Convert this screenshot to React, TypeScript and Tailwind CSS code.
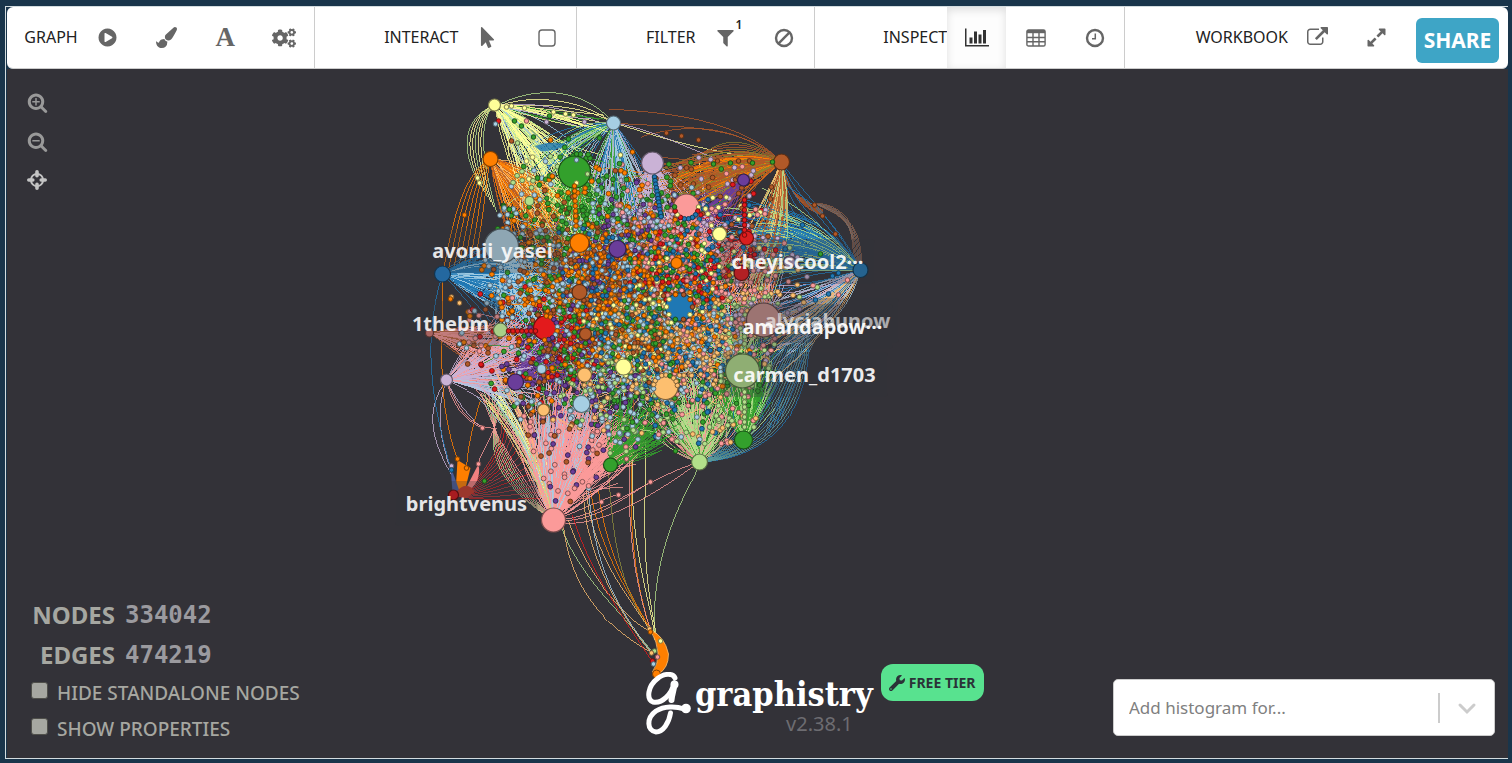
import React from "react";
import { FaCogs, FaMousePointer, FaWrench } from "react-icons/fa";

/* ---------- icons ---------- */

type IconProps = { className?: string };

const Glyph = ({ d, box = "0 0 1792 1792", className = "size-5" }: { d: string; box?: string; className?: string }) => (
  <svg viewBox={box} fill="currentColor" className={className} aria-hidden="true">
    <path d={d} fillRule="evenodd" />
  </svg>
);

const PLAY =
  "M896 128q209 0 385.5 103t279.5 279.5 103 385.5-103 385.5-279.5 279.5-385.5 103-385.5-103-279.5-279.5-103-385.5 103-385.5 279.5-279.5 385.5-103zm384 823q32-18 32-55t-32-55l-544-320q-31-19-64-1-32 19-32 56v640q0 37 32 56 16 8 32 8 17 0 32-9z";
const BRUSH =
  "M1615 0q70 0 122.5 46.5t52.5 116.5q0 63-45 151-332 629-465 752-97 91-218 91-126 0-216.5-92.5t-90.5-219.5q0-128 92-212l638-579q59-54 130-54zm-909 1034q39 76 106.5 130t150.5 76l1 71q4 213-129.5 347t-348.5 134q-123 0-218-46.5t-152.5-127.5-86.5-183-29-220q7 5 41 30t62 44.5 59 36.5 46 17q41 0 55-37 25-66 57.5-112.5t69.5-76 88-47.5 103-25.5 125-10.5z";
const FILTER =
  "M1595 295q17 41-14 70l-493 493v742q0 42-39 59-13 5-25 5-27 0-45-19l-256-256q-19-19-19-45v-486l-493-493q-31-29-14-70 17-39 59-39h1280q42 0 59 39z";
const CHART =
  "M640 896v512h-256v-512h256zm384-512v1024h-256v-1024h256zm1024 1152v128h-2048v-1536h128v1408h1920zm-640-896v768h-256v-768h256zm384-384v1152h-256v-1152h256z";
const EXTERNAL =
  "M1408 928v320q0 119-84.5 203.5t-203.5 84.5h-832q-119 0-203.5-84.5t-84.5-203.5v-832q0-119 84.5-203.5t203.5-84.5h704q14 0 23 9t9 23v64q0 14-9 23t-23 9h-704q-66 0-113 47t-47 113v832q0 66 47 113t113 47h832q66 0 113-47t47-113v-320q0-14 9-23t23-9h64q14 0 23 9t9 23zm384-864v512q0 26-19 45t-45 19-45-19l-176-176-652 652q-10 10-23 10t-23-10l-114-114q-10-10-10-23t10-23l652-652-176-176q-19-19-19-45t19-45 45-19h512q26 0 45 19t19 45z";
const EXPAND =
  "M883 1056q0 13-10 23l-332 332 144 144q19 19 19 45t-19 45-45 19h-448q-26 0-45-19t-19-45v-448q0-26 19-45t45-19 45 19l144 144 332-332q10-10 23-10t23 10l114 114q10 10 10 23zm781-864v448q0 26-19 45t-45 19-45-19l-144-144-332 332q-10 10-23 10t-23-10l-114-114q-10-10-10-23t10-23l332-332-144-144q-19-19-19-45t19-45 45-19h448q26 0 45 19t19 45z";
const LENS =
  "M1216 832q0-185-131.5-316.5t-316.5-131.5-316.5 131.5-131.5 316.5 131.5 316.5 316.5 131.5 316.5-131.5 131.5-316.5zm512 832q0 53-37.5 90.5t-90.5 37.5q-54 0-90-38l-343-342q-179 124-399 124-143 0-273.5-55.5t-225-150-150-225-55.5-273.5 55.5-273.5 150-225 225-150 273.5-55.5 273.5 55.5 225 150 150 225 55.5 273.5q0 220-124 399l343 343q37 37 37 90z";
const MINUS = "M480 768h576q32 0 32 32v64q0 32-32 32h-576q-32 0-32-32v-64q0-32 32-32z";
const PLUS =
  "M1088 800v64q0 13-9.5 22.5t-22.5 9.5h-224v224q0 13-9.5 22.5t-22.5 9.5h-64q-13 0-22.5-9.5t-9.5-22.5v-224h-224q-13 0-22.5-9.5t-9.5-22.5v-64q0-13 9.5-22.5t22.5-9.5h224v-224q0-13 9.5-22.5t22.5-9.5h64q13 0 22.5 9.5t9.5 22.5v224h224q13 0 22.5 9.5t9.5 22.5z";

const SquareIcon = () => (
  <svg viewBox="0 0 20 20" className="size-5" fill="none" stroke="currentColor" strokeWidth="1.4" aria-hidden="true">
    <rect x="2" y="2" width="16" height="16" rx="3" />
  </svg>
);
const BanIcon = () => (
  <svg viewBox="0 0 20 20" className="size-5" fill="none" stroke="currentColor" strokeWidth="2.4" aria-hidden="true">
    <circle cx="10" cy="10" r="8" />
    <path d="M4.4 15.6 15.6 4.4" />
  </svg>
);
const ClockIcon = () => (
  <svg viewBox="0 0 20 20" className="size-5" fill="none" stroke="currentColor" aria-hidden="true">
    <circle cx="10" cy="10" r="8" strokeWidth="2.4" />
    <path d="M10.3 5.5v5.2H7" strokeWidth="1.5" />
  </svg>
);
const TableIcon = () => (
  <svg viewBox="0 0 20 18" className="h-[18px] w-5" fill="none" stroke="currentColor" strokeWidth="1.4" aria-hidden="true">
    <rect x="0.9" y="1" width="18.2" height="16" rx="1.6" />
    <path d="M1 2.6h18" strokeWidth="3.2" />
    <path d="M1 8.5h18M1 12.7h18M7 3v14M13 3v14" />
  </svg>
);
const CrosshairIcon = () => (
  <svg viewBox="0 0 20 20" className="size-5" fill="none" stroke="currentColor" aria-hidden="true">
    <circle cx="10" cy="10" r="6.1" strokeWidth="1.9" />
    <path d="M10 1.8v4M10 14.2v4M1.8 10h4M14.2 10h4" strokeWidth="3.6" strokeLinecap="round" />
  </svg>
);
const LetterIcon = () => (
  <span className="font-['Liberation_Serif',serif] text-[27px] leading-none font-bold">A</span>
);
const ScriptG = ({ className }: IconProps) => (
  <svg viewBox="0 0 46 64" className={className} fill="none" stroke="#fff" strokeLinecap="round" aria-hidden="true">
    <path d="M30 6C28 1 19 1 12 7C3 14 1 27 8 30C17 32 27 22 29 11" strokeWidth="5" />
    <path d="M29.5 12C29 18 27 22 26.500 28" strokeWidth="6" />
    <path d="M25.500 41C24 51 18 60 11 60C2 59 1 46 11 39C19 34 31 34 39 37" strokeWidth="5" />
    <circle cx="41" cy="36.500" r="4.8" fill="#fff" stroke="none" />
    <circle cx="29.5" cy="12.500" r="4" fill="#fff" stroke="none" />
  </svg>
);

/* ---------- network drawing ---------- */

const C = {
  sky: "#a6cee3",
  blue: "#1f78b4",
  lime: "#b2df8a",
  green: "#33a02c",
  pink: "#fb9a99",
  red: "#e31a1c",
  sand: "#fdbf6f",
  orange: "#ff7f00",
  lilac: "#cab2d6",
  purple: "#6a3d9a",
  yellow: "#ffff99",
  brown: "#b15928",
};

let seed = 20417;
const rnd = () => {
  seed = (seed * 1664525 + 1013904223) % 4294967296;
  return seed / 4294967296;
};
const gauss = () => (rnd() + rnd() + rnd() - 1.5) / 1.5;
const pick = (list: string[]) => list[Math.floor(rnd() * list.length)];
const n1 = (v: number) => v.toFixed(1);
const shade = (hex: string) => {
  const v = parseInt(hex.slice(1), 16);
  const f = (s: number) => Math.round(((v >> s) & 255) * 0.5);
  return `rgb(${f(16)},${f(8)},${f(0)})`;
};
const shuffle = <T,>(list: T[]) => {
  for (let i = list.length - 1; i > 0; i--) {
    const j = Math.floor(rnd() * (i + 1));
    [list[i], list[j]] = [list[j], list[i]];
  }
  return list;
};

const OUTLINE: [number, number][] = [
  [520, 155], [560, 145], [600, 158], [640, 165], [700, 155], [755, 170], [770, 215], [800, 250], [830, 275], [800, 310], [772, 350], [768, 400], [750, 440],
  [715, 445], [650, 440], [618, 462], [590, 500], [548, 505], [530, 450], [510, 400], [465, 370], [455, 335], [475, 290], [495, 225], [508, 190],
];
const inside = (x: number, y: number) => {
  let hit = false;
  for (let i = 0, j = OUTLINE.length - 1; i < OUTLINE.length; j = i++) {
    const [xi, yi] = OUTLINE[i];
    const [xj, yj] = OUTLINE[j];
    if (yi > y !== yj > y && x < ((xj - xi) * (y - yi)) / (yj - yi) + xi) hit = !hit;
  }
  return hit;
};

const ZONES: { x: number; y: number; colors: string[] }[] = [
  { x: 520, y: 140, colors: [C.green, C.yellow, C.sky, C.lime] },
  { x: 575, y: 200, colors: [C.green, C.green, C.green, C.brown, C.orange, C.sky] },
  { x: 690, y: 165, colors: [C.brown, C.brown, C.green, C.lilac, C.pink] },
  { x: 645, y: 210, colors: [C.lilac, C.purple, C.sky, C.orange, C.green, C.pink] },
  { x: 740, y: 220, colors: [C.brown, C.red, C.pink, C.lilac, C.blue, C.yellow] },
  { x: 600, y: 260, colors: [C.orange, C.brown, C.orange, C.purple, C.sky, C.blue] },
  { x: 530, y: 270, colors: [C.sky, C.sky, C.brown, C.orange, C.green] },
  { x: 485, y: 320, colors: [C.sky, C.brown, C.pink, C.red, C.orange] },
  { x: 680, y: 270, colors: [C.pink, C.yellow, C.blue, C.orange, C.green, C.red] },
  { x: 640, y: 330, colors: [C.orange, C.blue, C.yellow, C.sand, C.brown, C.sky, C.green] },
  { x: 550, y: 350, colors: [C.sky, C.red, C.purple, C.orange, C.brown, C.green] },
  { x: 700, y: 350, colors: [C.sand, C.sand, C.orange, C.sky, C.blue, C.pink] },
  { x: 770, y: 310, colors: [C.pink, C.lime, C.lilac, C.sand] },
  { x: 600, y: 400, colors: [C.sky, C.sky, C.sand, C.green, C.purple, C.lime] },
  { x: 690, y: 410, colors: [C.sand, C.green, C.blue, C.pink, C.sky, C.lime] },
  { x: 745, y: 410, colors: [C.green, C.lime, C.sand, C.pink] },
  { x: 560, y: 460, colors: [C.pink, C.pink, C.pink, C.purple, C.sky, C.brown] },
];
const zoneColor = (x: number, y: number) => {
  let best = ZONES[0];
  let dist = Infinity;
  for (const z of ZONES) {
    const d = Math.hypot(z.x - x, z.y - y) + rnd() * 40;
    if (d < dist) {
      dist = d;
      best = z;
    }
  }
  return pick(best.colors);
};

type Node = { x: number; y: number; c: string; r: number };
const nodes: Node[] = [];
while (nodes.length < 850) {
  const x = 445 + rnd() * 390;
  const y = 140 + rnd() * 370;
  if (inside(x, y)) nodes.push({ x, y, c: zoneColor(x, y), r: 2.4 });
}
while (nodes.length < 2300) {
  const x = 632 + gauss() * 190;
  const y = 305 + gauss() * 190;
  if (inside(x, y)) nodes.push({ x, y, c: zoneColor(x, y), r: 2.4 });
}
while (nodes.length < 4700) {
  const x = 640 + gauss() * 145;
  const y = 302 + gauss() * 125;
  if (inside(x, y)) nodes.push({ x, y, c: zoneColor(x, y), r: 2.2 });
}

type Edge = { d: string; c: string };
const bendTo = (x1: number, y1: number, x2: number, y2: number, bend: number) => {
  const mx = (x1 + x2) / 2 - (y2 - y1) * bend;
  const my = (y1 + y2) / 2 + (x2 - x1) * bend;
  return `M${n1(x1)} ${n1(y1)}Q${n1(mx)} ${n1(my)} ${n1(x2)} ${n1(y2)}`;
};

/* source, target centre, target spread, count, colours, bend, bend spread */
type Fan = [number, number, number, number, number, number, number, string[], number, number];
const FANS: Fan[] = [
  [494, 105, 560, 195, 70, 65, 120, [C.yellow, C.yellow, C.lime, C.sky, C.yellow], -0.1, 0.3],
  [494, 105, 590, 125, 30, 15, 20, [C.yellow, C.green, C.lilac], -0.05, 0.2],
  [490, 159, 560, 240, 70, 70, 150, [C.orange, C.orange, C.sand, C.brown], -0.05, 0.3],
  [613, 123, 620, 215, 70, 50, 120, [C.sky, C.lilac, C.sky, C.blue, C.green], 0, 0.3],
  [613, 123, 545, 165, 40, 25, 50, [C.sky, C.blue, C.lime, C.green], 0.1, 0.3],
  [574, 172, 580, 225, 90, 50, 220, [C.green, C.green, C.lime], 0, 0.3],
  [652, 163, 655, 240, 90, 60, 120, [C.lilac], 0, 0.3],
  [781, 162, 690, 190, 90, 40, 200, [C.brown, C.brown, C.brown, C.brown, "#8a8a2c", C.orange], 0.12, 0.3],
  [781, 162, 745, 300, 40, 80, 60, [C.sand, C.brown, C.lime], -0.1, 0.2],
  [743, 180, 695, 220, 50, 35, 70, [C.purple], 0, 0.3],
  [686, 207, 690, 260, 80, 60, 150, [C.pink], 0, 0.3],
  [746, 238, 715, 270, 50, 50, 50, [C.red, C.pink], 0, 0.3],
  [860, 270, 755, 240, 60, 60, 160, [C.blue, C.blue, C.blue, C.lime], 0.15, 0.25],
  [860, 270, 760, 330, 55, 60, 80, [C.sky, C.sand, C.lilac, C.blue], -0.1, 0.25],
  [442, 274, 520, 285, 60, 65, 190, [C.blue, C.blue, C.blue, C.sky], -0.05, 0.3],
  [501, 246, 530, 310, 60, 70, 160, [C.sky], 0, 0.3],
  [428, 333, 500, 345, 60, 40, 80, [C.pink, C.pink, C.brown], 0, 0.2],
  [446, 380, 520, 345, 70, 60, 120, [C.lilac, C.lilac, C.pink], 0.05, 0.25],
  [446, 380, 530, 400, 50, 30, 30, [C.lilac, C.sky], -0.1, 0.2],
  [515, 382, 560, 340, 50, 50, 80, [C.purple], 0, 0.3],
  [545, 328, 560, 320, 60, 50, 90, [C.red], 0, 0.3],
  [743, 440, 740, 370, 45, 60, 230, [C.green, C.green, C.lime], 0.05, 0.3],
  [742, 371, 725, 330, 60, 60, 100, [C.lime], 0, 0.3],
  [699, 462, 690, 400, 80, 50, 220, [C.lime, C.lime, C.lime, C.pink, C.green], 0, 0.35],
  [610, 465, 645, 420, 60, 45, 140, [C.green], 0, 0.3],
  [553, 520, 565, 410, 70, 60, 260, [C.pink, C.pink, C.sky, C.lilac, C.pink, C.pink], -0.05, 0.25],
  [553, 520, 610, 440, 50, 50, 200, [C.pink], -0.12, 0.3],
  [553, 520, 495, 390, 25, 30, 50, [C.sand, C.pink, C.sky, C.lime, C.yellow], 0.1, 0.12],
  [763, 318, 760, 290, 50, 50, 60, [C.pink, C.lilac], 0, 0.3],
];

const body: Edge[] = [];
for (let i = 0; i < 3600; i++) {
  const a = nodes[Math.floor(rnd() * nodes.length)];
  const b = nodes[Math.floor(rnd() * nodes.length)];
  if (Math.hypot(a.x - b.x, a.y - b.y) < 110) body.push({ d: bendTo(a.x, a.y, b.x, b.y, gauss() * 0.3), c: a.c });
}
const fans: Edge[] = [];
for (const [x, y, tx, ty, sx, sy, count, colors, bend, spread] of FANS) {
  for (let i = 0; i < count; i++) {
    fans.push({ d: bendTo(x, y, tx + gauss() * sx, ty + gauss() * sy, bend + gauss() * spread), c: pick(colors) });
  }
}

const arc = (x1: number, y1: number, cx: number, cy: number, cx2: number, cy2: number, x2: number, y2: number, c: string): Edge => ({
  d: `M${x1} ${y1}C${n1(cx)} ${n1(cy)} ${n1(cx2)} ${n1(cy2)} ${x2} ${y2}`,
  c,
});
const strands: Edge[] = [
  arc(498, 105, 530, 88, 580, 84, 613, 123, C.lime),
  arc(498, 106, 530, 94, 580, 98, 613, 123, C.yellow),
  arc(498, 106, 540, 104, 580, 104, 613, 123, C.yellow),
  arc(608, 109, 660, 112, 740, 118, 781, 162, C.brown),
  arc(614, 123, 660, 128, 740, 120, 781, 162, C.brown),
  arc(640, 137, 680, 125, 730, 120, 781, 162, C.brown),
  arc(613, 123, 650, 128, 690, 150, 720, 160, C.lilac),
  arc(613, 123, 640, 130, 680, 148, 781, 162, C.yellow),
  arc(442, 274, 418, 350, 436, 420, 453, 478, C.blue),
  arc(446, 380, 424, 410, 430, 440, 453, 478, C.lilac),
  arc(446, 380, 432, 420, 444, 450, 453, 478, C.lilac),
  arc(442, 274, 442, 350, 436, 400, 457, 460, C.orange),
  arc(480, 400, 468, 440, 468, 450, 466, 466, C.orange),
  arc(500, 395, 500, 430, 480, 450, 478, 464, C.pink),
  arc(446, 380, 450, 400, 462, 420, 482, 428, C.pink),
  arc(446, 380, 455, 405, 470, 430, 496, 428, C.pink),
  arc(446, 380, 450, 392, 470, 420, 482, 428, C.lilac),
  arc(699, 465, 676, 510, 650, 560, 654, 640, C.lime),
  arc(645, 440, 645, 530, 640, 560, 657, 640, C.yellow),
  arc(633, 440, 626, 540, 648, 590, 655, 640, C.yellow),
  arc(632, 450, 626, 540, 640, 600, 650, 630, C.orange),
  arc(630, 450, 624, 540, 640, 600, 650, 630, C.pink),
  arc(608, 470, 612, 540, 620, 590, 650, 630, "#8c8c3c"),
  arc(598, 490, 605, 560, 640, 610, 650, 630, C.orange),
  arc(590, 490, 600, 560, 640, 610, 650, 630, C.orange),
  arc(586, 490, 590, 560, 640, 610, 650, 632, C.sand),
  arc(588, 490, 594, 560, 610, 600, 652, 654, C.sky),
  arc(583, 495, 585, 560, 630, 630, 652, 654, C.sand),
  arc(572, 515, 585, 560, 610, 600, 652, 662, C.red),
  arc(560, 525, 580, 580, 620, 610, 650, 650, C.lime),
  arc(563, 525, 570, 600, 620, 635, 650, 652, C.sand),
  arc(568, 520, 580, 560, 620, 620, 652, 632, C.sand),
  arc(553, 520, 590, 525, 620, 500, 650, 482, C.pink),
  arc(553, 522, 590, 530, 640, 505, 699, 462, C.pink),
  arc(553, 520, 600, 520, 640, 480, 699, 462, C.pink),
  arc(553, 520, 570, 515, 600, 500, 618, 494, C.pink),
];
for (let i = 0; i < 7; i++) {
  strands.push(arc(494, 105, 462 + i * 3, 118, 460 + i * 3, 150, 478 + i * 3, 182 + i * 5, i % 3 ? C.yellow : C.lime));
  strands.push(arc(490, 159, 462 + i * 4, 175, 454 + i * 5, 215, 442 + i * 5, 274, C.orange));
  strands.push(arc(781, 162, 782 + i * 2, 190 + i * 3, 800 + i * 2, 198 + i * 2, 822, 210 + i, C.brown));
  strands.push(arc(814, 204, 838 + i * 5, 200 + i * 4, 866 - i * 4, 230 + i * 2, 860, 270, i % 2 ? "#7a6a66" : "#8f5f45"));
  strands.push(arc(781, 162, 800 - i * 5, 190 + i * 8, 830 - i * 4, 215 + i * 4, 860, 270, C.blue));
}
for (let i = 0; i < 8; i++) {
  strands.push(arc(700 - i * 14, 158 + i * 4, 720, 135 + i * 3, 750, 138 + i * 2, 781, 162, i % 3 ? C.brown : "#8a7a2c"));
  strands.push(arc(553, 520, 525 - i * 3, 490, 500 - i * 4, 450, 480 + i * 4, 392, i % 2 ? C.lime : C.pink));
}
for (let i = 0; i < 16; i++) {
  strands.push(arc(808 - i, 325, 812 - i * 3, 380 - i, 795 - i * 3, 455 - i * 2, 702, 462, i % 3 ? "#5d9c9c" : C.blue));
  strands.push(arc(860, 270, 835 - i, 300, 810 - i * 3, 340, 780 - i * 4, 420 + (i % 5) * 4, i % 2 ? C.blue : "#5c8394"));
}
for (let i = 0; i < 14; i++) {
  strands.push(arc(453, 496, 475, 500 - i, 505, 500 - i * 4, 540 - i * 3, 498 - i * 6, i % 4 ? "#b8383a" : C.red));
}

const layers = (edges: Edge[], size: number) => {
  const out: Edge[] = [];
  for (let i = 0; i < edges.length; i += size) {
    const byColor = new Map<string, string>();
    for (const e of edges.slice(i, i + size)) byColor.set(e.c, (byColor.get(e.c) ?? "") + e.d);
    byColor.forEach((d, c) => out.push({ d, c }));
  }
  return out;
};

const HUBS: [number, number, number, string][] = [
  [494, 105, 6, C.yellow], [613, 123, 7, C.sky], [490, 159, 7.5, C.orange], [574, 172, 16, C.green], [652, 163, 11, C.lilac],
  [781, 162, 8, C.brown], [743, 180, 6, C.purple], [686, 207, 13, C.pink], [719, 234, 7, C.yellow], [746, 238, 7, "#d81f1f"],
  [741, 273, 7.5, "#b22024"], [860, 270, 7.5, "#25638f"], [501, 246, 17, "#8ea6b3"], [442, 274, 8, "#2468a0"], [579, 243, 9.5, C.orange],
  [617, 249, 8.5, C.purple], [676, 263, 5.5, C.orange], [579, 292, 7.5, C.brown], [679, 307, 14, C.blue], [545, 328, 12, C.red],
  [585, 334, 6, C.brown], [500, 330, 7, "#a9cf88"], [429, 333, 4, "#a86460"], [446, 380, 6, C.lilac], [515, 382, 8, C.purple],
  [584, 375, 7, C.sand], [623, 367, 8, C.yellow], [665, 387, 12.5, C.sand], [742, 371, 17, "#8fae73"], [581, 404, 8.5, C.sky],
  [543, 410, 6, C.sand], [541, 369, 4.5, C.sky], [610, 465, 7, C.green], [743, 440, 9, C.green], [699, 462, 8, C.lime],
  [553, 520, 12, C.pink], [453, 495, 5, "#a81c20"], [529, 201, 4.5, C.lime], [789, 262, 6, "#8d7e96"], [763, 320, 17, "#9c7472"],
];

const SATELLITES: [number, number, string][] = [
  [506, 107, C.yellow], [511, 106, C.yellow], [524, 108, C.yellow], [553, 112, C.yellow], [565, 114, C.yellow], [573, 115, C.yellow],
  [498, 121, C.red], [495, 124, C.sky], [514, 121, C.green], [521, 126, C.green], [526, 121, C.pink], [546, 122, C.lilac],
  [584, 122, C.lilac], [549, 116, C.green], [533, 137, C.green], [550, 140, C.orange], [511, 141, C.brown], [517, 143, C.lime],
  [477, 178, C.yellow], [479, 183, C.yellow], [464, 215, C.orange], [568, 139, C.green], [599, 138, C.green], [666, 133, C.brown],
  [681, 136, C.brown], [698, 140, C.brown], [814, 205, C.brown], [822, 216, C.brown], [835, 234, C.brown], [802, 225, C.blue],
  [771, 187, C.brown], [770, 199, C.brown], [772, 162, C.green], [820, 254, C.green], [838, 273, C.blue], [832, 276, C.blue],
  [828, 294, C.blue], [815, 300, C.blue], [838, 295, C.pink], [847, 280, C.pink], [457, 459, C.orange], [466, 468, C.orange],
  [451, 466, C.lilac], [451, 470, C.blue], [478, 464, C.pink], [484, 481, C.green], [482, 428, C.pink], [650, 482, C.pink],
  [618, 495, C.pink], [601, 502, C.pink], [626, 459, C.pink], [649, 629, C.sand], [650, 632, C.orange], [660, 641, C.yellow],
  [654, 651, C.lime], [651, 653, C.sand], [657, 657, C.pink], [652, 661, C.red], [653, 664, C.sky], [675, 451, C.green],
  [451, 297, C.sand], [459, 303, C.sand], [450, 299, C.orange], [459, 344, C.sky], [466, 348, C.sky],
  [576, 160, C.sky], [587, 174, C.lime], [576, 183, C.yellow], [620, 155, C.yellow], [632, 152, C.orange], [576, 154, C.green],
  [717, 161, C.brown], [713, 164, C.green], [730, 163, C.green], [738, 161, C.brown], [749, 161, C.brown], [752, 163, C.green],
];
for (let i = 0; i < 12; i++) SATELLITES.push([654 + i * 0.6, 177 + i * 3.6, C.blue]);
for (let i = 0; i < 9; i++) SATELLITES.push([574 + i * 0.2, 186 + i * 5, C.orange]);
for (let i = 0; i < 8; i++) SATELLITES.push([744, 200 + i * 5, C.red]);
for (let i = 0; i < 7; i++) SATELLITES.push([508 + i * 4.5, 331, C.red]);
for (let i = 0; i < 8; i++) SATELLITES.push([744, 392 + i * 5, C.lime]);
/* leaves that nibble at the rim of the large hubs */
for (let i = 0; i < 10; i++) {
  const a = i * 0.35;
  SATELLITES.push([686 + Math.cos(a) * 12, 207 + Math.sin(a) * 12, pick([C.yellow, C.green, C.red, C.blue])]);
  SATELLITES.push([679 + Math.cos(a * 1.8) * 13, 307 + Math.sin(a * 1.8) * 13, pick([C.yellow, C.orange, C.green, C.brown])]);
  SATELLITES.push([665 + Math.cos(a + 3) * 12, 387 + Math.sin(a + 3) * 12, pick([C.sky, C.sand, C.green])]);
  SATELLITES.push([545 + Math.cos(a - 1.500) * 12, 328 + Math.sin(a - 1.500) * 12, pick([C.orange, C.purple, C.sky])]);
}

const LABELS: [string, number, number, number, number][] = [
  ["avonii_yasei", 492, 258, 142, 0.88],
  ["cheyiscool2···", 797, 269, 154, 0.92],
  ["alyciabunow", 827, 328, 142, 0.6],
  ["1thebm", 450, 331, 98, 0.88],
  ["amandapow···", 812, 334, 160, 0.94],
  ["carmen_d1703", 804, 382, 166, 0.92],
  ["brightvenus", 466, 511, 142, 0.9],
];

const edgeLayers = layers(shuffle([...fans, ...body]), 260);
const strandLayers = layers(strands, 400);

const Network = () => (
  <svg
    viewBox="6 69 1502 689"
    preserveAspectRatio="xMidYMid slice"
    className="absolute inset-0 size-full"
    role="img"
    aria-label="Network graph"
  >
    <g fill="none" strokeWidth="0.9" shapeRendering="crispEdges">
      {strandLayers.map((e, i) => (
        <path key={i} d={e.d} stroke={e.c} opacity="0.85" />
      ))}
      {edgeLayers.map((e, i) => (
        <path key={i} d={e.d} stroke={e.c} opacity="0.85" />
      ))}
    </g>
    <path d="M650 630Q664 636 668 654Q668 668 658 674L652 672Q664 655 650 630Z" fill={C.orange} stroke={C.sand} strokeWidth="0.8" />
    <path d="M457 460L470 468L463 496L455 494Z" fill={C.orange} />
    <path d="M450 466L460 494L452 492Z" fill="#4a5b96" />
    <path d="M478 464Q482 484 462 495Z" fill="#f28080" />
    <path d="M453 495Q466 478 474 492L466 498Z" fill="#c33a28" />
    <path d="M534 146Q552 140 568 145Q552 152 540 151Z" fill={C.blue} opacity="0.8" />
    <circle cx="656" cy="674" r="4" fill={C.orange} stroke={shade(C.orange)} />
    {nodes.map((n, i) => (
      <circle key={i} cx={n1(n.x)} cy={n1(n.y)} r={n.r} fill={n.c} stroke={shade(n.c)} strokeWidth="0.9" />
    ))}
    {LABELS.map(([text, x, y, w]) => (
      <rect key={text} x={x - w / 2} y={y - 30} width={w} height="45" rx="4" fill="#333238" opacity="0.28" />
    ))}
    {HUBS.map(([x, y, r, c], i) => (
      <circle key={i} cx={x} cy={y} r={r} fill={c} stroke={shade(c)} strokeWidth="1.2" />
    ))}
    {SATELLITES.map(([x, y, c], i) => (
      <circle key={i} cx={x} cy={y} r="2.3" fill={c} stroke={shade(c)} strokeWidth="1" />
    ))}
    {LABELS.map(([text, x, y, , o]) => (
      <text
        key={text}
        x={x}
        y={y}
        textAnchor="middle"
        fill="#fff"
        fillOpacity={o}
        className="font-['Noto_Sans','Open_Sans',sans-serif] text-[20px] font-bold"
      >
        {text}
      </text>
    ))}
  </svg>
);

/* ---------- toolbar ---------- */

const Tool = ({ label, active, children }: { label: string; active?: boolean; children: React.ReactNode }) => (
  <button
    type="button"
    aria-label={label}
    className={
      active
        ? "flex w-[59px] shrink-0 items-center justify-center bg-[#fdfdfd] text-[#333] shadow-[inset_0_3px_8px_rgba(0,0,0,0.125)]"
        : "flex w-[59px] shrink-0 items-center justify-center text-[#666]"
    }
  >
    {children}
  </button>
);

const Group = ({ title, className, children }: { title: string; className: string; children: React.ReactNode }) => (
  <div className={`flex shrink-0 justify-end border-r border-[#ccc] ${className}`}>
    <span className="self-center pb-[2px] text-base text-[#222]">{title}</span>
    {children}
  </div>
);

const Toolbar = () => (
  <header className="flex h-[62px] shrink-0 rounded-md border-b border-[#ccc] bg-white">
    <Group title="GRAPH" className="w-[20.500%]">
      <Tool label="Play layout"><Glyph d={PLAY} className="size-[21px]" /></Tool>
      <Tool label="Appearance"><Glyph d={BRUSH} className="size-[21px]" /></Tool>
      <Tool label="Labels"><LetterIcon /></Tool>
      <Tool label="Settings"><FaCogs className="h-5 w-6" /></Tool>
    </Group>
    <Group title="INTERACT" className="w-[17.500%]">
      <Tool label="Pointer"><FaMousePointer className="size-[21px]" /></Tool>
      <Tool label="Selection box"><SquareIcon /></Tool>
    </Group>
    <Group title="FILTER" className="w-[15.800%]">
      <Tool label="Filters">
        <span className="relative">
          <Glyph d={FILTER} className="size-[21px]" />
          <span className="absolute -top-[10px] left-[21px] text-xs leading-4 font-semibold text-[#222]">1</span>
        </span>
      </Tool>
      <Tool label="Exclusions"><BanIcon /></Tool>
    </Group>
    <Group title="INSPECT" className="w-[20.700%]">
      <Tool label="Histograms" active><Glyph d={CHART} box="0 0 2048 1792" className="h-[21px] w-6" /></Tool>
      <Tool label="Table"><TableIcon /></Tool>
      <Tool label="Timeline"><ClockIcon /></Tool>
    </Group>
    <div className="flex flex-1 justify-end pr-[9px]">
      <span className="self-center pb-[2px] text-base text-[#222]">WORKBOOK</span>
      <Tool label="Open in new tab"><Glyph d={EXTERNAL} className="size-[21px]" /></Tool>
      <Tool label="Full screen"><Glyph d={EXPAND} className="size-[21px]" /></Tool>
      <button type="button" className="mt-[11px] ml-[10px] h-[45px] w-[83px] rounded-md bg-[#3ea5c6] text-[21px] font-bold text-white">
        SHARE
      </button>
    </div>
  </header>
);

const Toggle = ({ id, label }: { id: string; label: string }) => (
  <div className="flex h-9 items-center gap-[9px]">
    <input
      id={id}
      type="checkbox"
      className="mb-[6px] size-[17px] appearance-none rounded-[3px] border border-[#4f4f4a] bg-[#a6a7a1] checked:bg-[#3ea5c6]"
    />
    <label htmlFor={id} className="text-[19px] font-medium text-[#a6a7a1]">{label}</label>
  </div>
);

export default function App() {
  return (
    <div className="flex min-h-screen flex-col bg-[#19354b] pt-[6px] pr-1 pb-1 pl-[5px] font-['Noto_Sans','Open_Sans',sans-serif]">
      <div className="flex flex-1 flex-col border-y border-l border-[#d3dcdf] pl-px">
        <Toolbar />
        <main className="relative flex flex-1 flex-col justify-between bg-[#333238]">
          <Network />
          <nav aria-label="Zoom" className="relative flex flex-col items-start gap-[18px] pt-[23px] pl-5 text-[#999]">
            <button type="button" aria-label="Zoom in"><Glyph d={LENS + PLUS} className="size-[21px]" /></button>
            <button type="button" aria-label="Zoom out"><Glyph d={LENS + MINUS} className="size-[21px]" /></button>
            <button type="button" aria-label="Center view" className="text-[#c4c4c4]"><CrosshairIcon /></button>
          </nav>

          <footer className="relative flex items-end">
            <div className="w-[42.500%] pb-[11px] pl-6">
              <dl className="grid grid-cols-[84px_auto] justify-start gap-x-[10px] text-2xl leading-10 font-bold">
                <dt className="text-right text-[#a6a7a1]">NODES</dt>
                <dd className="font-['DejaVu_Sans_Mono',monospace] text-[#9b9a9f]">334042</dd>
                <dt className="text-right text-[#a6a7a1]">EDGES</dt>
                <dd className="font-['DejaVu_Sans_Mono',monospace] text-[#9b9a9f]">474219</dd>
              </dl>
              <Toggle id="hide-standalone" label="HIDE STANDALONE NODES" />
              <Toggle id="show-properties" label="SHOW PROPERTIES" />
            </div>

            <div className="flex items-start pb-[22px]">
              <a href="#graphistry" className="mt-[8px] flex items-start gap-1" aria-label="graphistry v2.38.1">
                <ScriptG className="h-16 w-[46px]" />
                <span className="flex flex-col pr-2">
                  <span className="font-['DejaVu_Serif_Condensed','DejaVu_Serif',serif] text-[34px] leading-[44px] font-bold text-white">
                    graphistry
                  </span>
                  <span className="-mt-1 self-end pr-5 text-xl leading-6 text-[#6d6c71]">v2.38.1</span>
                </span>
              </a>
              <button type="button" className="flex h-[37px] items-center gap-1 rounded-xl bg-[#58e28f] px-2 text-sm font-bold text-[#2b3338]">
                <FaWrench className="size-4" />
                FREE TIER
              </button>
            </div>

            <div className="mr-[13px] mb-[22px] ml-auto flex h-[57px] w-[382px] items-center rounded-[5px] border border-[#ccc] bg-white">
              <select aria-label="Add histogram for..." className="h-full flex-1 appearance-none bg-transparent px-[15px] text-[17px] text-[#808080]">
                <option>Add histogram for...</option>
              </select>
              <span className="h-[30px] w-[2px] bg-[#ccc]" />
              <svg viewBox="0 0 20 20" className="mx-[17px] size-5" fill="none" stroke="#ccc" strokeWidth="3" strokeLinecap="round" aria-hidden="true">
                <path d="M3 7l7 7 7-7" />
              </svg>
            </div>
          </footer>
        </main>
      </div>
    </div>
  );
}
